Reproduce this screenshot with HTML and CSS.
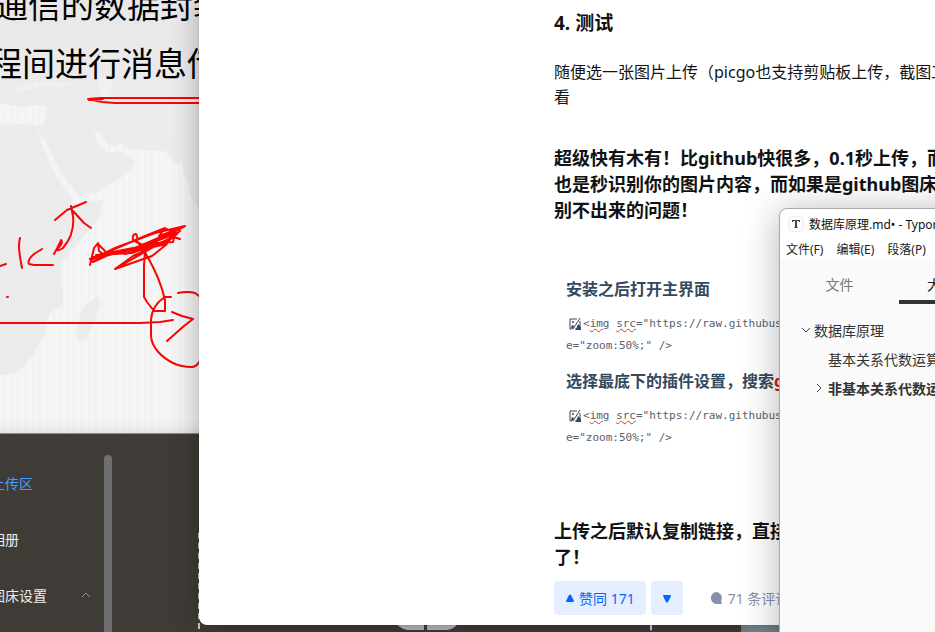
FILE: index.html
```html
<!DOCTYPE html>
<html lang="zh-CN">
<head>
<meta charset="utf-8">
<title>桌面</title>
<link rel="stylesheet" href="styles.css">
</head>
<body>
<main class="desktop">

  <section class="window slide">
    <svg class="slide-art" width="239" height="434" viewBox="-40 0 239 434" aria-hidden="true">
      <defs>
        <pattern id="stripes" width="7" height="8" patternUnits="userSpaceOnUse">
          <rect width="7" height="8" fill="#f4f4f4"/>
          <rect x="1" width="1" height="8" fill="#f7f7f7"/>
          <rect x="4" width="1" height="8" fill="#f1f1f1"/>
        </pattern>
        <linearGradient id="fade" x1="0" y1="0" x2="0" y2="1">
          <stop offset="0" stop-color="#e8e8e8"/>
          <stop offset=".25" stop-color="#ececec"/>
          <stop offset="1" stop-color="#ebebeb"/>
        </linearGradient>
      </defs>
      <rect x="-40" width="239" height="434" fill="url(#fade)"/>
      <g fill="url(#stripes)">
        <path d="M-40 100L4 104 22 107 36 105 48 107 45 118 42 126 26 123 12 125-4 122-40 122Z"/>
        <path d="M18 86L35 82 60 82 72 84 60 88 45 86 28 90 15 92Z" opacity=".5"/>
        <path d="M98 79L107 76 113 83 111 91 113 97 102 97 100 89Z" opacity=".7"/>
        <path d="M36 130L45 141 53 157 61 173 70 184 80 199 74 200 62 185 53 170 45 151Z"/>
        <path d="M94 130L101 133 106 143 113 146 121 144 127 149 135 150 165 151 177 165 182 162 184 175 191 190 199 202V434H-40V380L0 375 14 374 24 366 34 354 38 345 46 335 45 323 50 313 63 305 63 290 60 275 61 263 72 250 88 232 99 217 104 200 88 201 74 205 72 200 85 196 98 192 118 180 132 169 135 161 125 153 117 151 107 153 98 144Z"/>
      </g>
      <path d="M98 296L100 305 92 327 86 340 78 341 76 330 82 308Z" fill="#ebebeb"/>
      <path d="M188 190H199V208L193 202Z" fill="#ebebeb"/>
    </svg>
    <p class="slide-line first">通信的数据封装</p>
    <p class="slide-line second">程间进行消息传</p>
    <svg class="slide-art" width="239" height="434" viewBox="-40 0 239 434" aria-hidden="true" fill="none" stroke="#fa0505" stroke-width="2" stroke-linecap="round" stroke-linejoin="round">
      <path d="M199 98H101L88 99 102 102 115 103H199M89 100L103 99"/>
      <path d="M-10 265L0 266 6 264M20 238C18 245 19 252 22 268M42 249L34 254Q27 260 29 264L34 265H53M54 254Q60 243 61 240Q64 243 57 249Q56 252 63 248Q75 234 73 216L71 206M55 220L67 210 86 202M73 211L84 223 91 228"/>
      <path d="M0 323H140L160 322 173 320M7 297H8"/>
      <path d="M90 265L94 248 98 243 99 251 106 256 93 262 90 259 94 257 128 250 151 244 185 226 155 233 115 248 93 259 130 250 166 243 177 234 150 249 115 269 133 256 169 240 180 231M98 244L107 253M94 258L145 236 165 228 159 236 176 230 173 242 156 243 137 249M148 235L167 229M172 229L167 235 180 239M115 269L152 256 167 244 148 248 133 240Q132 234 136 234 138 236 137 242L146 250M96 255L132 253 165 241M140 246L172 232M125 254L160 245"/>
      <path d="M100 255L136 248 176 233M113 253L150 247" stroke-width="3"/>
      <path d="M145 252L144 265 144 297 147 302 154 311 165 311 165 300Q160 278 147 256ZM171 297L165 297Q152 305 151 320V335C151 348 163 358 173 363Q181 367 192 367 197 367 201 359M178 293Q188 291 195 293L199 296M172 312L182 316 193 319 184 326 167 341"/>
    </svg>
  </section>

  <section class="window uploader">
    <nav class="side">
      <a class="side-item current" href="#">上传区</a>
      <a class="side-item" href="#">相册</a>
      <a class="side-item" href="#">图床设置
        <svg width="10" height="6" viewBox="0 0 10 6" fill="none" stroke="#909399" aria-hidden="true"><path d="M1 5L5 1 9 5"/></svg>
      </a>
    </nav>
    <div class="side-scroll"></div>
    <div class="drop-zone">
      <svg width="70" height="50" viewBox="0 0 70 50" fill="#b8b8b8" aria-hidden="true"><path d="M18 50A17 17 0 0 1 14 17 23 23 0 0 1 57 20 15 15 0 0 1 54 50H37V34H34V50Z"/></svg>
    </div>
  </section>

  <section class="window reader">
    <article class="article">
      <h2 class="step">4. 测试</h2>
      <p class="body-text">随便选一张图片上传（picgo也支持剪贴板上传，截图工具<br>看</p>
      <h2 class="claim">超级快有木有！比github快很多，0.1秒上传，而且<br>也是秒识别你的图片内容，而如果是github图床上<br>别不出来的问题！</h2>
      <section class="sample">
        <h3>安装之后打开主界面</h3>
        <p class="code"><svg class="thumb" width="14" height="12" viewBox="0 0 14 12" aria-hidden="true"><path d="M9 1H2V11H4M12 3V11H7" fill="none" stroke="#34495e"/><path d="M3 10L4 7 6 8 5 11ZM8 11L10 6 13 9V12H8Z" fill="#34495e"/><path d="M12 0L5 11" stroke="#34495e"/><circle cx="5" cy="4" r="1" fill="#34495e"/></svg>&lt;<span class="typo">img</span> <span class="typo">src</span>="https://raw.githubuserco<br>e="zoom:50%;" /&gt;</p>
        <h3>选择最底下的插件设置，搜索<span class="hot">gitee</span></h3>
        <p class="code"><svg class="thumb" width="14" height="12" viewBox="0 0 14 12" aria-hidden="true"><path d="M9 1H2V11H4M12 3V11H7" fill="none" stroke="#34495e"/><path d="M3 10L4 7 6 8 5 11ZM8 11L10 6 13 9V12H8Z" fill="#34495e"/><path d="M12 0L5 11" stroke="#34495e"/><circle cx="5" cy="4" r="1" fill="#34495e"/></svg>&lt;<span class="typo">img</span> <span class="typo">src</span>="https://raw.githubuserco<br>e="zoom:50%;" /&gt;</p>
      </section>
      <h2 class="outro">上传之后默认复制链接，直接粘<br>了！</h2>
      <div class="actions">
        <button class="vote" type="button"><svg width="10" height="9" viewBox="0 0 10 9" fill="currentColor" aria-hidden="true"><path d="M4 1Q5 0 6 1L9 7Q9 8 8 8H2Q1 8 1 7Z"/></svg>赞同 171</button>
        <button class="vote down" type="button" aria-label="反对"><svg width="10" height="9" viewBox="0 0 10 9" fill="currentColor" aria-hidden="true"><path d="M4 8Q5 9 6 8L9 2Q9 1 8 1H2Q1 1 1 2Z"/></svg></button>
        <button class="comments" type="button"><svg width="14" height="14" viewBox="0 0 14 14" fill="currentColor" aria-hidden="true"><path d="M7 1A6 6 0 1 0 9 13L13 13 12 10A6 6 0 0 0 7 1Z"/></svg>71 条评论</button>
      </div>
    </article>
  </section>

  <section class="window editor">
    <header class="titlebar">
      <svg width="16" height="16" viewBox="0 0 16 16" aria-hidden="true"><rect x=".5" y=".5" width="15" height="15" rx="3" fill="#fafafa" stroke="#eee"/><path d="M4 4H12V6H11Q11 5 10 5H9V11L10 12H6L7 11V5H6Q5 5 5 6H4Z" fill="#444"/></svg>
      <span>数据库原理.md• - Typora</span>
    </header>
    <nav class="menubar">
      <button type="button">文件(F)</button>
      <button type="button">编辑(E)</button>
      <button type="button">段落(P)</button>
    </nav>
    <div class="panel">
      <div class="tabs">
        <button class="tab" type="button">文件</button>
        <button class="tab active" type="button">大纲</button>
      </div>
      <ul class="outline">
        <li><svg width="8" height="6" viewBox="0 0 8 6" fill="none" stroke="#444" aria-hidden="true"><path d="M0 1L4 5 8 1"/></svg>数据库原理</li>
        <li class="nested"><span class="gap"></span>基本关系代数运算</li>
        <li class="nested strong"><svg width="8" height="8" viewBox="0 0 8 8" fill="none" stroke="#444" aria-hidden="true"><path d="M1 0L5 4 1 8"/></svg>非基本关系代数运算</li>
      </ul>
    </div>
  </section>

</main>
</body>
</html>
```
FILE: styles.css
```css
* {
  box-sizing: border-box;
}

body,
h2,
h3,
p,
ul {
  margin: 0;
  padding: 0;
}

body {
  font-family: "Noto Sans", "Noto Sans CJK SC", sans-serif;
  overflow: hidden;
}

button {
  font: inherit;
  color: inherit;
  background: none;
  border: 0;
  padding: 0;
  white-space: nowrap;
}

svg {
  flex: none;
}

.desktop {
  position: relative;
  height: 100vh;
  overflow: hidden;
  background: #7b9197;
}

.window {
  position: absolute;
  overflow: hidden;
}

/* Presentation slide */

.slide {
  left: -40px;
  top: 0;
  width: 260px;
  height: 434px;
  background: #f4f4f4;
  border-bottom: 1px solid #999;
  padding-left: 29px;
}

.slide-art {
  position: absolute;
  left: 0;
  top: 0;
}

.slide-line {
  position: relative;
  font-family: "Noto Sans CJK SC", sans-serif;
  font-size: 33px;
  line-height: 58px;
  color: #000;
  white-space: nowrap;
}

.first {
  margin-top: -25px;
  padding-left: 6px;
}

/* Image uploader */

.uploader {
  left: -80px;
  top: 434px;
  width: 821px;
  height: 320px;
  display: flex;
  background: #3f3c37;
  box-shadow: 0 0 16px rgba(0, 0, 0, 0.15);
}

.side {
  width: 184px;
  padding: 21px 13px 0 71px;
}

.side-item {
  display: flex;
  align-items: center;
  justify-content: space-between;
  height: 56px;
  font-size: 14px;
  color: #eee;
  text-decoration: none;
  white-space: nowrap;
}

.side-item.current {
  color: #409eff;
}

.side-scroll {
  width: 8px;
  margin-top: 21px;
  border-radius: 4px;
  background: #6f6f6f;
}

.drop-zone {
  width: 454px;
  height: 180px;
  margin: 95px 0 0 86px;
  padding-top: 49px;
  text-align: center;
  border: 2px dashed #ccc;
  border-radius: 4px;
}

/* Article reader */

.reader {
  left: 199px;
  right: -400px;
  top: 0;
  padding: 10px 0 10px 355px;
  background: #fff;
  border-radius: 0 0 8px 8px;
  box-shadow: 0 0 1px rgba(0, 0, 0, 0.5), 0 0 28px rgba(0, 0, 0, 0.3);
}

.article {
  color: #121212;
  white-space: nowrap;
}

.article h2 {
  font-size: 18px;
  line-height: 26px;
}

.article .step {
  font-size: 19px;
}

.body-text {
  margin-top: 24px;
  font-size: 16px;
  line-height: 25px;
}

.article .claim {
  margin-top: 35px;
}

.sample {
  margin-top: 54px;
  padding-left: 12px;
  color: #34495e;
}

.sample h3 {
  font-size: 16px;
  line-height: 24px;
}

.code {
  margin: 12px 0;
  font-family: "DejaVu Sans Mono", monospace;
  font-size: 11px;
  line-height: 22px;
  color: #56616c;
}

.thumb {
  margin: 0 1px 0 2px;
  vertical-align: -3px;
}

.typo {
  text-decoration: underline wavy #d33 1px;
}

.hot {
  color: #d01818;
}

.article .outro {
  margin-top: 69px;
}

.actions {
  display: flex;
  align-items: center;
  margin-top: 11px;
  font-size: 14px;
}

.vote {
  display: flex;
  align-items: center;
  justify-content: center;
  gap: 4px;
  height: 34px;
  padding: 0 11px;
  color: #06f;
  background: #e5eeff;
  border-radius: 3px;
}

.vote.down {
  margin-left: 5px;
}

.comments {
  display: flex;
  align-items: center;
  gap: 5px;
  margin-left: 26px;
  color: #8590a6;
}

/* Markdown editor */

.editor {
  left: 779px;
  right: -300px;
  top: 208px;
  bottom: -100px;
  background: #fff;
  border: 1px solid #aaa;
  border-radius: 8px;
  box-shadow: 0 4px 36px rgba(0, 0, 0, 0.3);
  display: flex;
  flex-direction: column;
  white-space: nowrap;
}

.titlebar {
  display: flex;
  align-items: center;
  gap: 5px;
  height: 29px;
  padding-left: 8px;
  font-size: 12px;
  color: #111;
}

.menubar {
  display: flex;
  align-items: center;
  gap: 13px;
  height: 21px;
  padding-left: 6px;
  font-size: 12px;
  color: #222;
}

.panel {
  flex: 1;
  background: #fafafa;
  font-size: 14px;
}

.tabs {
  display: flex;
  height: 45px;
}

.tab {
  width: 119px;
  padding-top: 8px;
  color: #777;
  border-bottom: 4px solid transparent;
}

.tab.active {
  width: 84px;
  color: #222;
  border-color: #333;
}

.outline {
  list-style: none;
  margin-top: 11px;
  padding-left: 22px;
  color: #333;
}

.outline li {
  display: flex;
  align-items: center;
  gap: 4px;
  height: 29px;
}

.nested {
  padding-left: 14px;
}

.gap {
  width: 8px;
}

.strong {
  font-weight: bold;
}
```
